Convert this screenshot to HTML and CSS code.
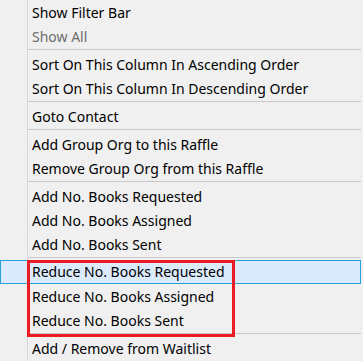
FILE: index.html
```html
<!DOCTYPE html>
<html>
<head>
<meta charset="utf-8">
<link rel="stylesheet" href="styles.css">
</head>
<body>
<div class="menu">
  <div class="item">Show Filter Bar</div>
  <div class="item disabled">Show All</div>
  <div class="sep"></div>
  <div class="item">Sort On This Column In Ascending Order</div>
  <div class="item">Sort On This Column In Descending Order</div>
  <div class="sep"></div>
  <div class="item">Goto Contact</div>
  <div class="sep"></div>
  <div class="item">Add Group Org to this Raffle</div>
  <div class="item">Remove Group Org from this Raffle</div>
  <div class="sep"></div>
  <div class="item">Add No. Books Requested</div>
  <div class="item">Add No. Books Assigned</div>
  <div class="item">Add No. Books Sent</div>
  <div class="sep"></div>
  <div class="item hover">Reduce No. Books Requested</div>
  <div class="item">Reduce No. Books Assigned</div>
  <div class="item">Reduce No. Books Sent</div>
  <div class="sep"></div>
  <div class="item">Add / Remove from Waitlist</div>
  <div class="mark"></div>
</div>
</body>
</html>
```

FILE: styles.css
```css
html, body {
  margin: 0;
  padding: 0;
  background: #f0f0f0;
}
.menu {
  position: relative;
  width: 361px;
  height: 361px;
  font-family: "Noto Sans", "Open Sans", sans-serif;
  font-size: 14px;
  color: #000;
  background: linear-gradient(to right, transparent 27px, #d7d7d7 27px, #d7d7d7 28px, transparent 28px);
}
.item {
  height: 24px;
  line-height: 24px;
  padding-left: 32px;
  padding-top: 1px;
  white-space: nowrap;
  box-sizing: border-box;
}
.item.disabled {
  color: #6d6d6d;
}
.item.hover {
  background: #dcebfc;
  border: 1px solid #26a0da;
  line-height: 22px;
  padding-left: 31px;
  padding-top: 0;
}
.sep {
  height: 4px;
  margin-left: 28px;
  background: linear-gradient(#c9c9c9, #c9c9c9) no-repeat 0 1px / 100% 1px;
}
.mark {
  position: absolute;
  left: 27px;
  top: 260px;
  width: 208px;
  height: 77px;
  box-sizing: border-box;
  border: 3px solid #ed1c24;
}
```
